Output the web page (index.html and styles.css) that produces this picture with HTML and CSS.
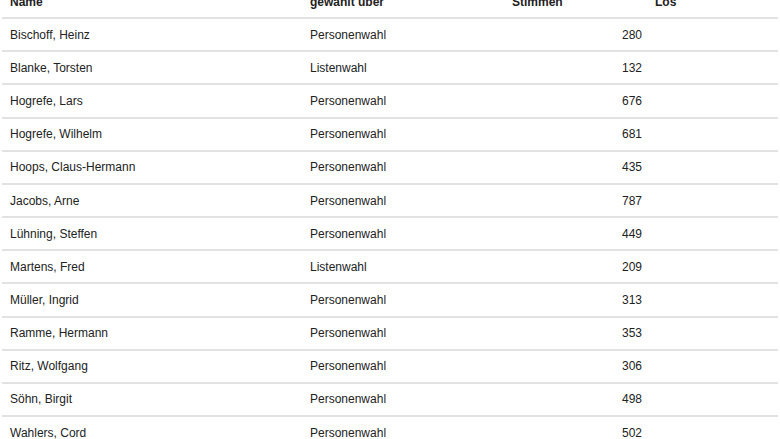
FILE: index.html
```html
<!DOCTYPE html>
<html lang="de">
<head>
<meta charset="utf-8">
<title>Gewählte Mitglieder</title>
<link rel="stylesheet" href="styles.css">
</head>
<body>
<div class="wrap">
<table class="results">
<thead>
<tr><th class="c-name">Name</th><th class="c-via">gewählt über</th><th class="c-votes">Stimmen</th><th class="c-los">Los</th></tr>
</thead>
<tbody>
<tr><td>Bischoff, Heinz</td><td>Personenwahl</td><td class="num">280</td><td></td></tr>
<tr><td>Blanke, Torsten</td><td>Listenwahl</td><td class="num">132</td><td></td></tr>
<tr><td>Hogrefe, Lars</td><td>Personenwahl</td><td class="num">676</td><td></td></tr>
<tr><td>Hogrefe, Wilhelm</td><td>Personenwahl</td><td class="num">681</td><td></td></tr>
<tr><td>Hoops, Claus-Hermann</td><td>Personenwahl</td><td class="num">435</td><td></td></tr>
<tr><td>Jacobs, Arne</td><td>Personenwahl</td><td class="num">787</td><td></td></tr>
<tr><td>Lühning, Steffen</td><td>Personenwahl</td><td class="num">449</td><td></td></tr>
<tr><td>Martens, Fred</td><td>Listenwahl</td><td class="num">209</td><td></td></tr>
<tr><td>Müller, Ingrid</td><td>Personenwahl</td><td class="num">313</td><td></td></tr>
<tr><td>Ramme, Hermann</td><td>Personenwahl</td><td class="num">353</td><td></td></tr>
<tr><td>Ritz, Wolfgang</td><td>Personenwahl</td><td class="num">306</td><td></td></tr>
<tr><td>Söhn, Birgit</td><td>Personenwahl</td><td class="num">498</td><td></td></tr>
<tr><td>Wahlers, Cord</td><td>Personenwahl</td><td class="num">502</td><td></td></tr>
</tbody>
</table>
</div>
</body>
</html>
```
FILE: styles.css
```css
html, body {
  margin: 0;
  padding: 0;
  background: #fff;
}
body {
  font-family: "Liberation Sans", Arial, sans-serif;
  font-size: 12px;
  color: #222;
  overflow: hidden;
}
.wrap {
  padding: 0 2px;
  margin-top: -14px;
}
.results {
  width: 776px;
  border-collapse: collapse;
  table-layout: fixed;
}
.results th,
.results td {
  height: 31.17px;
  padding: 0 8px;
  text-align: left;
  vertical-align: middle;
  border-bottom: 2px solid #e2e2e2;
}
.results th {
  font-weight: bold;
  color: #222;
}
.results tbody tr:last-child td {
  border-bottom: 0;
}
.c-name { width: 284px; }
.c-via { width: 186px; }
.c-votes { width: 130px; padding-right: 5px !important; }
.num {
  text-align: right !important;
  padding-right: 5px !important;
}
```
